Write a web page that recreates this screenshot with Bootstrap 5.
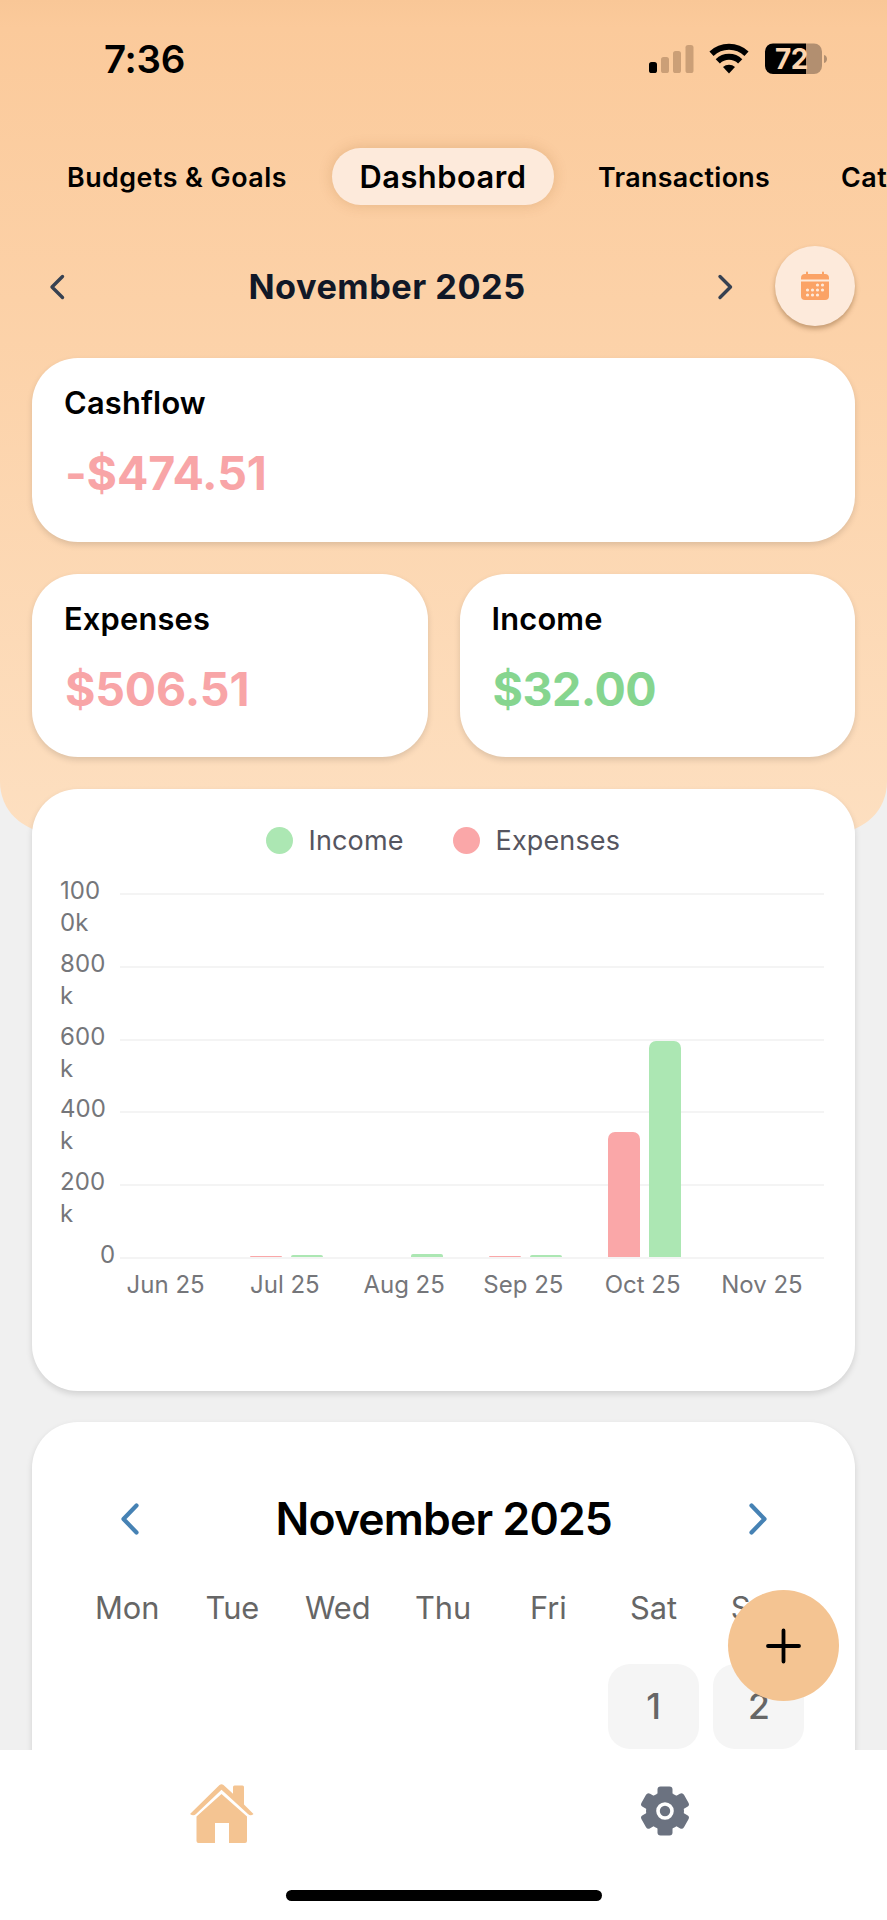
<!DOCTYPE html>
<html lang="en">
<head>
<meta charset="utf-8">
<meta name="viewport" content="width=device-width, initial-scale=1">
<title>Dashboard</title>
<link href="https://cdn.jsdelivr.net/npm/bootstrap@5.3.0/dist/css/bootstrap.min.css" rel="stylesheet">
<style>
  body { font-family: Inter, "Liberation Sans", sans-serif; background: #f0f0f0; color: #000; width: 887px; height: 1920px; overflow: hidden; }
  .screen { width: 887px; height: 1920px; overflow: hidden; }
  .backdrop { height: 832px; border-radius: 0 0 50px 50px; background: linear-gradient(#f9c797 0, #fbca9b 28px, #fcd1a7 300px, #fddfc0 832px); z-index: 0; }
  .content { z-index: 1; }
  .statusbar { height: 118px; padding: 0 59px 0 104px; }
  .clock { font-size: 38.5px; font-weight: 600; letter-spacing: -.3px; line-height: 1; }
  .tabs { height: 57px; margin-top: 30px; font-weight: 600; font-size: 26.8px; letter-spacing: .5px; white-space: nowrap; }
  .tab-item { line-height: 59px; flex: none; }
  .tab-first { margin-left: 67px; width: 265px; }
  .tab-third { margin-left: 44px; width: 243px; letter-spacing: .35px; }
  .pill { width: 222px; height: 57px; border-radius: 29px; background: #fdeadb; font-size: 30.8px; letter-spacing: .5px; line-height: 58px; box-shadow: 0 0 14px rgba(150,90,30,.22); }
  .month-row { height: 80px; margin-top: 41px; padding: 0 32px 0 48px; }
  .month { font-size: 34.3px; letter-spacing: .5px; font-weight: 700; color: #111827; white-space: nowrap; line-height: 1; padding: 2px 7px 0 0; }
  .round-btn { width: 80px; height: 80px; margin-left: 42px; background: #fdeadb; box-shadow: 0 3px 5px rgba(90,50,10,.35); }
  .tile { border: 0; border-radius: 46px; background: #fff; box-shadow: 0 3px 6px rgba(0,0,0,.13); }
  .stat { height: 183.5px; padding: 26px 32px 0; }
  .stat-title { font-size: 30.8px; letter-spacing: .2px; font-weight: 600; line-height: 37px; }
  .stat-value { font-size: 46.5px; font-weight: 700; line-height: 56px; margin: 24px 0 0 1px; letter-spacing: -.15px; }
  .neg { color: #f8a5a7; } .pos { color: #86d58f; letter-spacing: -.5px; }
  .tiles { padding: 0 32px; margin-top: 32px; gap: 32px; }
  .chart-tile { height: 602px; }
  .legend-row { height: 27px; margin-top: 38px; padding-left: 233.5px; font-size: 27px; letter-spacing: .15px; color: #555560; line-height: 28px; }
  .dot { width: 27px; height: 27px; margin-right: 16px; }
  .legend-gap { width: 144px; }
  .bg-inc { background: #ace7b3; } .bg-exp { background: #faa7a8; }
  .chart { margin: 39px 31px 0 28px; height: 366px; font-size: 24px; color: #75767a; letter-spacing: .1px; }
  .y-axis { width: 60px; line-height: 32px; margin-top: -18px; }
  .y-axis div { height: 72.75px; }
  .y-axis .zero { padding-left: 40px; }
  .grid-row { height: 72.75px; border-top: 2px solid #f4f4f4; }
  .grid-row.base { height: 2px; }
  .bars { left: -13px; width: 715.5px; height: 364px; top: 0; }
  .slot { width: 119.25px; gap: 9px; padding-left: 2px; }
  .bar { width: 32px; border-radius: 7px 7px 0 0; }
  .bar.flat { border-radius: 2px 2px 0 0; }
  .x-axis { margin-left: 74px; width: 715.5px; font-size: 24px; color: #75767a; letter-spacing: 0; line-height: 30px; margin-top: 11px; white-space: nowrap; }
  .x-axis div { width: 119.25px; text-align: center; }
  .cal-tile { height: 420px; margin: 31px 32px 0; padding: 66.5px 42px 0; }
  .cal-head { height: 60px; padding: 0 45px 0 45.5px; }
  .cal-title { font-size: 44.5px; letter-spacing: -.85px; font-weight: 600; line-height: 60px; white-space: nowrap; }
  .week { display: grid; grid-template-columns: repeat(7, 105.3px); width: 737px; margin-left: .5px; text-align: center; }
  .dow { font-size: 30.8px; color: #666; line-height: 38px; margin-top: 40.5px; }
  .day { width: 91px; height: 84.5px; border-radius: 22px; background: #f5f5f5; font-size: 35.5px; font-weight: 500; color: #666; line-height: 86px; margin: 37px auto 0; }
  .fab { left: 728px; top: 1590px; width: 111px; height: 111px; background: #f4c492; z-index: 3; }
  .bottom { top: 1749.5px; height: 170.5px; background: #fff; z-index: 2; }
  .bottom .slot-half { width: 50%; height: 122px; }
  .home-icon { margin-top: 5px; }
  .indicator { width: 316px; height: 11px; border-radius: 6px; background: #000; margin: 18.500px auto 0; }
</style>
</head>
<body>
<div class="screen position-relative">
  <div class="backdrop position-absolute top-0 start-0 w-100"></div>

  <div class="content position-relative">
    <div class="statusbar d-flex align-items-center justify-content-between">
      <div class="clock">7:36</div>
      <svg width="180" height="40" viewBox="0 0 180 40">
        <rect x="1" y="23" width="8" height="11" rx="2.600"/>
        <g fill="#cb9f77"><rect x="13" y="18" width="8" height="16" rx="2.600"/><rect x="25" y="12" width="8" height="22" rx="2.600"/><rect x="37.500" y="6" width="8" height="28" rx="2.600"/></g>
        <g fill="none" stroke="#000" stroke-width="6"><path d="M63.500 14.800a25.500 25.500 0 0 1 35 0"/><path d="M69.800 22.300a16 16 0 0 1 22.400 0"/></g>
        <path d="M75 28a9 9 0 0 1 12 0l-6 6.400z"/>
        <path d="M125 4.500H158V35H125a8 8 0 0 1-8-8V12.500a8 8 0 0 1 8-8z"/>
        <path d="M158 4.500h8a8 8 0 0 1 8 8V27a8 8 0 0 1-8 8h-8z" fill="#b28f70"/>
        <path d="M176 16c4 1 4 7 0 8z" fill="#b28f70"/>
        <text x="127" y="29.500" font-size="28" font-weight="700" fill="#fcd5af" letter-spacing="-.6">72</text>
      </svg>
    </div>

    <nav class="tabs d-flex">
      <div class="tab-item tab-first">Budgets &amp; Goals</div>
      <div class="tab-item pill text-center">Dashboard</div>
      <div class="tab-item tab-third">Transactions</div>
      <div class="tab-item">Categories</div>
    </nav>

    <div class="month-row d-flex align-items-center">
      <svg width="17" height="27" viewBox="0 0 17 27" fill="none" stroke="#374151" stroke-width="3.400" stroke-linecap="round" stroke-linejoin="round"><path d="M14.500 3.500 4 14l10.500 10.500"/></svg>
      <div class="month flex-grow-1 text-center">November 2025</div>
      <svg width="17" height="27" viewBox="0 0 17 27" fill="none" stroke="#374151" stroke-width="3.400" stroke-linecap="round" stroke-linejoin="round"><path d="M4 3.500 14.500 14 4 24.500"/></svg>
      <div class="round-btn rounded-circle d-flex align-items-center justify-content-center">
        <svg width="30" height="30" viewBox="0 0 30 30" fill="#fba366">
          <path d="M1 8.500V7q0-4 4-4h1V1.500q0-1 1-1t1 1V3h14V1.500q0-1 1-1t1 1V3h1q4 0 4 4v1.500z"/>
          <path d="M1 10.500h28V25q0 4-4 4H5q-4 0-4-4z"/>
          <g fill="#fdeadb"><circle cx="17.500" cy="14" r="1.600"/><circle cx="22.500" cy="14" r="1.600"/><circle cx="7.500" cy="19" r="1.600"/><circle cx="12.500" cy="19" r="1.600"/><circle cx="17.500" cy="19" r="1.600"/><circle cx="22.500" cy="19" r="1.600"/><circle cx="7.500" cy="24" r="1.600"/><circle cx="12.500" cy="24" r="1.600"/><circle cx="17.500" cy="24" r="1.600"/></g>
        </svg>
      </div>
    </div>

    <div class="tiles d-flex flex-column">
      <div class="card tile stat">
        <div class="stat-title">Cashflow</div>
        <div class="stat-value neg">-$474.51</div>
      </div>
      <div class="d-flex" style="gap:32px">
        <div class="card tile stat flex-fill w-50">
          <div class="stat-title">Expenses</div>
          <div class="stat-value neg">$506.51</div>
        </div>
        <div class="card tile stat flex-fill w-50">
          <div class="stat-title">Income</div>
          <div class="stat-value pos">$32.00</div>
        </div>
      </div>

      <div class="card tile chart-tile">
        <div class="legend-row d-flex align-items-center">
          <span class="dot rounded-circle bg-inc"></span><span class="legend-gap">Income</span>
          <span class="dot rounded-circle bg-exp"></span><span>Expenses</span>
        </div>
        <div class="chart d-flex">
          <div class="y-axis">
            <div>100<br>0k</div><div>800<br>k</div><div>600<br>k</div><div>400<br>k</div><div>200<br>k</div><div class="zero">0</div>
          </div>
          <div class="flex-grow-1 position-relative">
            <div class="grid-row"></div><div class="grid-row"></div><div class="grid-row"></div><div class="grid-row"></div><div class="grid-row"></div><div class="grid-row base"></div>
            <div class="bars position-absolute d-flex">
              <div class="slot"></div>
              <div class="slot d-flex align-items-end justify-content-center"><div class="bar flat bg-exp" style="height:1px"></div><div class="bar flat bg-inc" style="height:2px"></div></div>
              <div class="slot d-flex align-items-end justify-content-center"><div class="bar" style="height:0"></div><div class="bar flat bg-inc" style="height:3px"></div></div>
              <div class="slot d-flex align-items-end justify-content-center"><div class="bar flat bg-exp" style="height:1px"></div><div class="bar flat bg-inc" style="height:2px"></div></div>
              <div class="slot d-flex align-items-end justify-content-center"><div class="bar bg-exp" style="height:125px"></div><div class="bar bg-inc" style="height:216px"></div></div>
              <div class="slot"></div>
            </div>
          </div>
        </div>
        <div class="x-axis d-flex">
          <div>Jun 25</div><div>Jul 25</div><div>Aug 25</div><div>Sep 25</div><div>Oct 25</div><div>Nov 25</div>
        </div>
      </div>
    </div>

    <div class="card tile cal-tile">
      <div class="cal-head d-flex align-items-center justify-content-between">
        <svg width="20" height="32" viewBox="0 0 20 32" fill="none" stroke="#4682b4" stroke-width="4.200" stroke-linecap="round" stroke-linejoin="round"><path d="M16.500 2.500 3.500 16l13 13.500"/></svg>
        <div class="cal-title">November 2025</div>
        <svg width="20" height="32" viewBox="0 0 20 32" fill="none" stroke="#4682b4" stroke-width="4.200" stroke-linecap="round" stroke-linejoin="round"><path d="M3.500 2.500 16.500 16l-13 13.500"/></svg>
      </div>
      <div class="week dow"><div>Mon</div><div>Tue</div><div>Wed</div><div>Thu</div><div>Fri</div><div>Sat</div><div>Sun</div></div>
      <div class="week"><div></div><div></div><div></div><div></div><div></div><div class="day">1</div><div class="day">2</div></div>
    </div>
  </div>

  <button class="fab btn p-0 border-0 rounded-circle position-absolute d-flex align-items-center justify-content-center" aria-label="Add">
    <svg width="40" height="40" viewBox="0 0 40 40" stroke="#000" stroke-width="3.800" stroke-linecap="round"><path d="M19.500 4.500v31M4 20h31"/></svg>
  </button>

  <div class="bottom position-absolute start-0 w-100">
    <div class="d-flex">
      <div class="slot-half d-flex align-items-center justify-content-center">
        <svg class="home-icon" width="66" height="64" viewBox="0 0 66 64" fill="#f4c492">
          <path d="M1 33 30.500 4q2-1.700 4 0L44 12.800V6q0-1.500 1.500-1.500h8Q55 4.500 55 6v17.500L64.500 33q-3 2.500-5.500 0L32.500 8.800 7 33Q4.500 35.500 1 33z"/>
          <path d="M7.500 35.500 32.500 13 58 35.500V60q0 2-2 2H40V42H26v20H9.500q-2 0-2-2z"/>
        </svg>
      </div>
      <div class="slot-half d-flex align-items-center justify-content-center">
        <svg width="50" height="50" viewBox="0 0 50 50">
          <g fill="#6b7280"><circle cx="25" cy="25" r="19"/>
            <rect x="17.500" y=".5" width="15" height="49" rx="3"/>
            <rect x="17.500" y=".5" width="15" height="49" rx="3" transform="rotate(60 25 25)"/>
            <rect x="17.500" y=".5" width="15" height="49" rx="3" transform="rotate(120 25 25)"/></g>
          <circle cx="25" cy="25" r="7" fill="#6b7280" stroke="#fff" stroke-width="3.600"/>
        </svg>
      </div>
    </div>
    <div class="indicator"></div>
  </div>
</div>
<script src="https://cdn.jsdelivr.net/npm/bootstrap@5.3.0/dist/js/bootstrap.bundle.min.js"></script>
</body>
</html>
